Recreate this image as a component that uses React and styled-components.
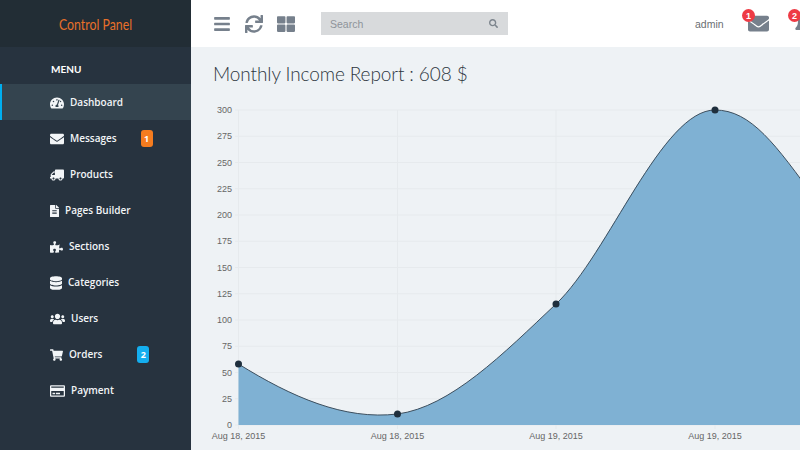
import React from 'react'
import styled, { createGlobalStyle } from 'styled-components'
import {
  FaBars, FaBell, FaDatabase, FaEnvelope, FaFileAlt, FaPuzzlePiece, FaRegCreditCard,
  FaSearch, FaShoppingCart, FaSync, FaTachometerAlt, FaThLarge, FaTruck, FaUsers,
} from 'react-icons/fa'

const GlobalStyle = createGlobalStyle`
html, body {
  margin: 0;
  padding: 0;
  overflow: hidden;
  background: #eef2f5;
}
`

const Page = styled.div`
display: flex;
width: 800px;
height: 450px;
overflow: hidden;
font-family: "Open Sans", sans-serif;
`

const Sidebar = styled.aside`
flex: 0 0 191px;
background-color: #27333f;
color: #f2f5f7;
`

const Brand = styled.div`
height: 47px;
display: flex;
align-items: center;
padding-left: 59px;
background-color: #222d35;
color: #e8702a;
font-family: "Lato", sans-serif;
font-size: 15px;

span {
  transform: scaleX(0.82);
  transform-origin: left center;
}
`

const MenuTitle = styled.div`
height: 37px;
padding: 16px 0 0 51px;
box-sizing: border-box;
font-family: "Lato", sans-serif;
font-size: 10px;
line-height: 13px;
font-weight: 700;
color: #fff;
`

const Item = styled.div`
height: 36px;
display: flex;
align-items: center;
gap: 6px;
box-sizing: border-box;
padding-left: ${p => (p.$active ? '48px' : '50px')};
border-left: ${p => (p.$active ? '2px solid #00aeef' : 'none')};
background-color: ${p => (p.$active ? '#34444f' : 'transparent')};
font-size: 10px;
font-weight: 600;

svg {
  width: ${p => p.$iconWidth}px;
  height: 14px;
  margin-top: 2px;
  transform: ${p => (p.$flip ? 'scaleX(-1)' : 'none')};
}
`

const Badge = styled.span`
margin-left: ${p => p.$offset}px;
margin-top: 1px;
width: 12px;
height: 17px;
border-radius: 3px;
display: flex;
align-items: center;
justify-content: center;
background-color: ${p => p.$color};
color: #fff;
font-size: 9px;
font-weight: 700;
`

const Main = styled.main`
flex: 1;
min-width: 0;
display: flex;
flex-direction: column;
`

const Topbar = styled.header`
flex: 0 0 47px;
display: flex;
align-items: center;
padding-left: 22px;
background-color: #fff;
color: #76808c;
overflow: hidden;
`

const ToolIcons = styled.div`
display: flex;
align-items: center;
gap: 14px;
font-size: 18px;

svg {
  display: block;
}
`

const Search = styled.div`
margin-left: 26px;
width: 187px;
height: 23px;
flex: none;
box-sizing: border-box;
padding: 0 10px 0 9px;
display: flex;
align-items: center;
justify-content: space-between;
background-color: #d8dadc;
color: #8e949a;
font-family: "Liberation Sans", sans-serif;
font-size: 10.5px;

svg {
  font-size: 9px;
  color: #7d858d;
}
`

const UserName = styled.span`
margin-left: 187px;
width: 29px;
flex: none;
font-family: "Liberation Sans", sans-serif;
font-size: 10.5px;
color: #6a6e72;
`

const Notify = styled.div`
position: relative;
flex: none;
margin-left: ${p => p.$gap}px;
display: flex;
font-size: 21px;
color: #76808c;
`

const Dot = styled.span`
position: absolute;
top: -4px;
left: -6px;
width: 13px;
height: 13px;
border-radius: 50%;
background-color: #ee3b45;
color: #fff;
font-family: "Liberation Sans", sans-serif;
font-size: 9px;
font-weight: 700;
display: flex;
align-items: center;
justify-content: center;
`

const Title = styled.h1`
margin: 0;
padding: 15px 0 0 22px;
height: 53px;
box-sizing: border-box;
font-family: "Lato", sans-serif;
font-size: 19px;
font-weight: 300;
letter-spacing: -0.1px;
color: #2d3640;
`

const Chart = styled.svg`
display: block;
flex: none;

text {
  font-family: "Liberation Sans", sans-serif;
  font-size: 9px;
  fill: #666;
}
`

const menu = [
  { label: 'Dashboard', icon: FaTachometerAlt, iconWidth: 14, active: true },
  { label: 'Messages', icon: FaEnvelope, iconWidth: 14, badge: '1', color: '#f57c1f', offset: 18 },
  { label: 'Products', icon: FaTruck, iconWidth: 14, flip: true },
  { label: 'Pages Builder', icon: FaFileAlt, iconWidth: 9 },
  { label: 'Sections', icon: FaPuzzlePiece, iconWidth: 13 },
  { label: 'Categories', icon: FaDatabase, iconWidth: 12 },
  { label: 'Users', icon: FaUsers, iconWidth: 15 },
  { label: 'Orders', icon: FaShoppingCart, iconWidth: 13, badge: '2', color: '#14aeef', offset: 29 },
  { label: 'Payment', icon: FaRegCreditCard, iconWidth: 15 },
]

// chart coordinates are relative to the svg, which starts at 191,100
const X = [47.5, 206.5, 365, 524]
const xLabels = ['Aug 18, 2015', 'Aug 18, 2015', 'Aug 19, 2015', 'Aug 19, 2015']
const Y0 = 325
const yFor = v => Y0 - v * 1.05
const ticks = [0, 25, 50, 75, 100, 125, 150, 175, 200, 225, 250, 275, 300]
const points = [[47.5, 264], [206.5, 314], [365, 204], [524, 10]]
const curve = 'M47.5 264 C100.5 297 153.5 320.4 206.5 314 C259.5 307 312 254 365 204 C418 153.6 471 10 524 10 C560 10 585 45 625 100'

const App = () => {
  return (
    <Page>
      <GlobalStyle />
      <Sidebar>
        <Brand><span>Control Panel</span></Brand>
        <MenuTitle>MENU</MenuTitle>
        {menu.map(item => (
          <Item key={item.label} $active={item.active} $iconWidth={item.iconWidth} $flip={item.flip}>
            <item.icon />
            {item.label}
            {item.badge && <Badge $color={item.color} $offset={item.offset}>{item.badge}</Badge>}
          </Item>
        ))}
      </Sidebar>
      <Main>
        <Topbar>
          <ToolIcons>
            <FaBars />
            <FaSync />
            <FaThLarge />
          </ToolIcons>
          <Search>
            Search
            <FaSearch />
          </Search>
          <UserName>admin</UserName>
          <Notify $gap={24}>
            <FaEnvelope />
            <Dot>1</Dot>
          </Notify>
          <Notify $gap={25}>
            <FaBell />
            <Dot>2</Dot>
          </Notify>
        </Topbar>
        <Title>Monthly Income Report : 608 $</Title>
        <Chart width="609" height="350" viewBox="0 0 609 350">
          {ticks.map(t => (
            <g key={t}>
              <line x1="44" x2="609" y1={yFor(t)} y2={yFor(t)} stroke="#e6eaed" />
              <text x="41" y={yFor(t) + 3} textAnchor="end">{t}</text>
            </g>
          ))}
          {X.map((x, i) => (
            <g key={x}>
              <line x1={x} x2={x} y1="10" y2={Y0 + 4} stroke="#e6eaed" />
              <text x={x} y="338.5" textAnchor="middle">{xLabels[i]}</text>
            </g>
          ))}
          <path d={`${curve} V${Y0} H47.5 Z`} fill="#7fb1d3" />
          <path d={curve} fill="none" stroke="#3d4f5e" strokeWidth="1" />
          {points.map(([x, y]) => (
            <circle key={x} cx={x} cy={y} r="3.5" fill="#1f2f3d" />
          ))}
        </Chart>
      </Main>
    </Page>
  )
}

export default App
